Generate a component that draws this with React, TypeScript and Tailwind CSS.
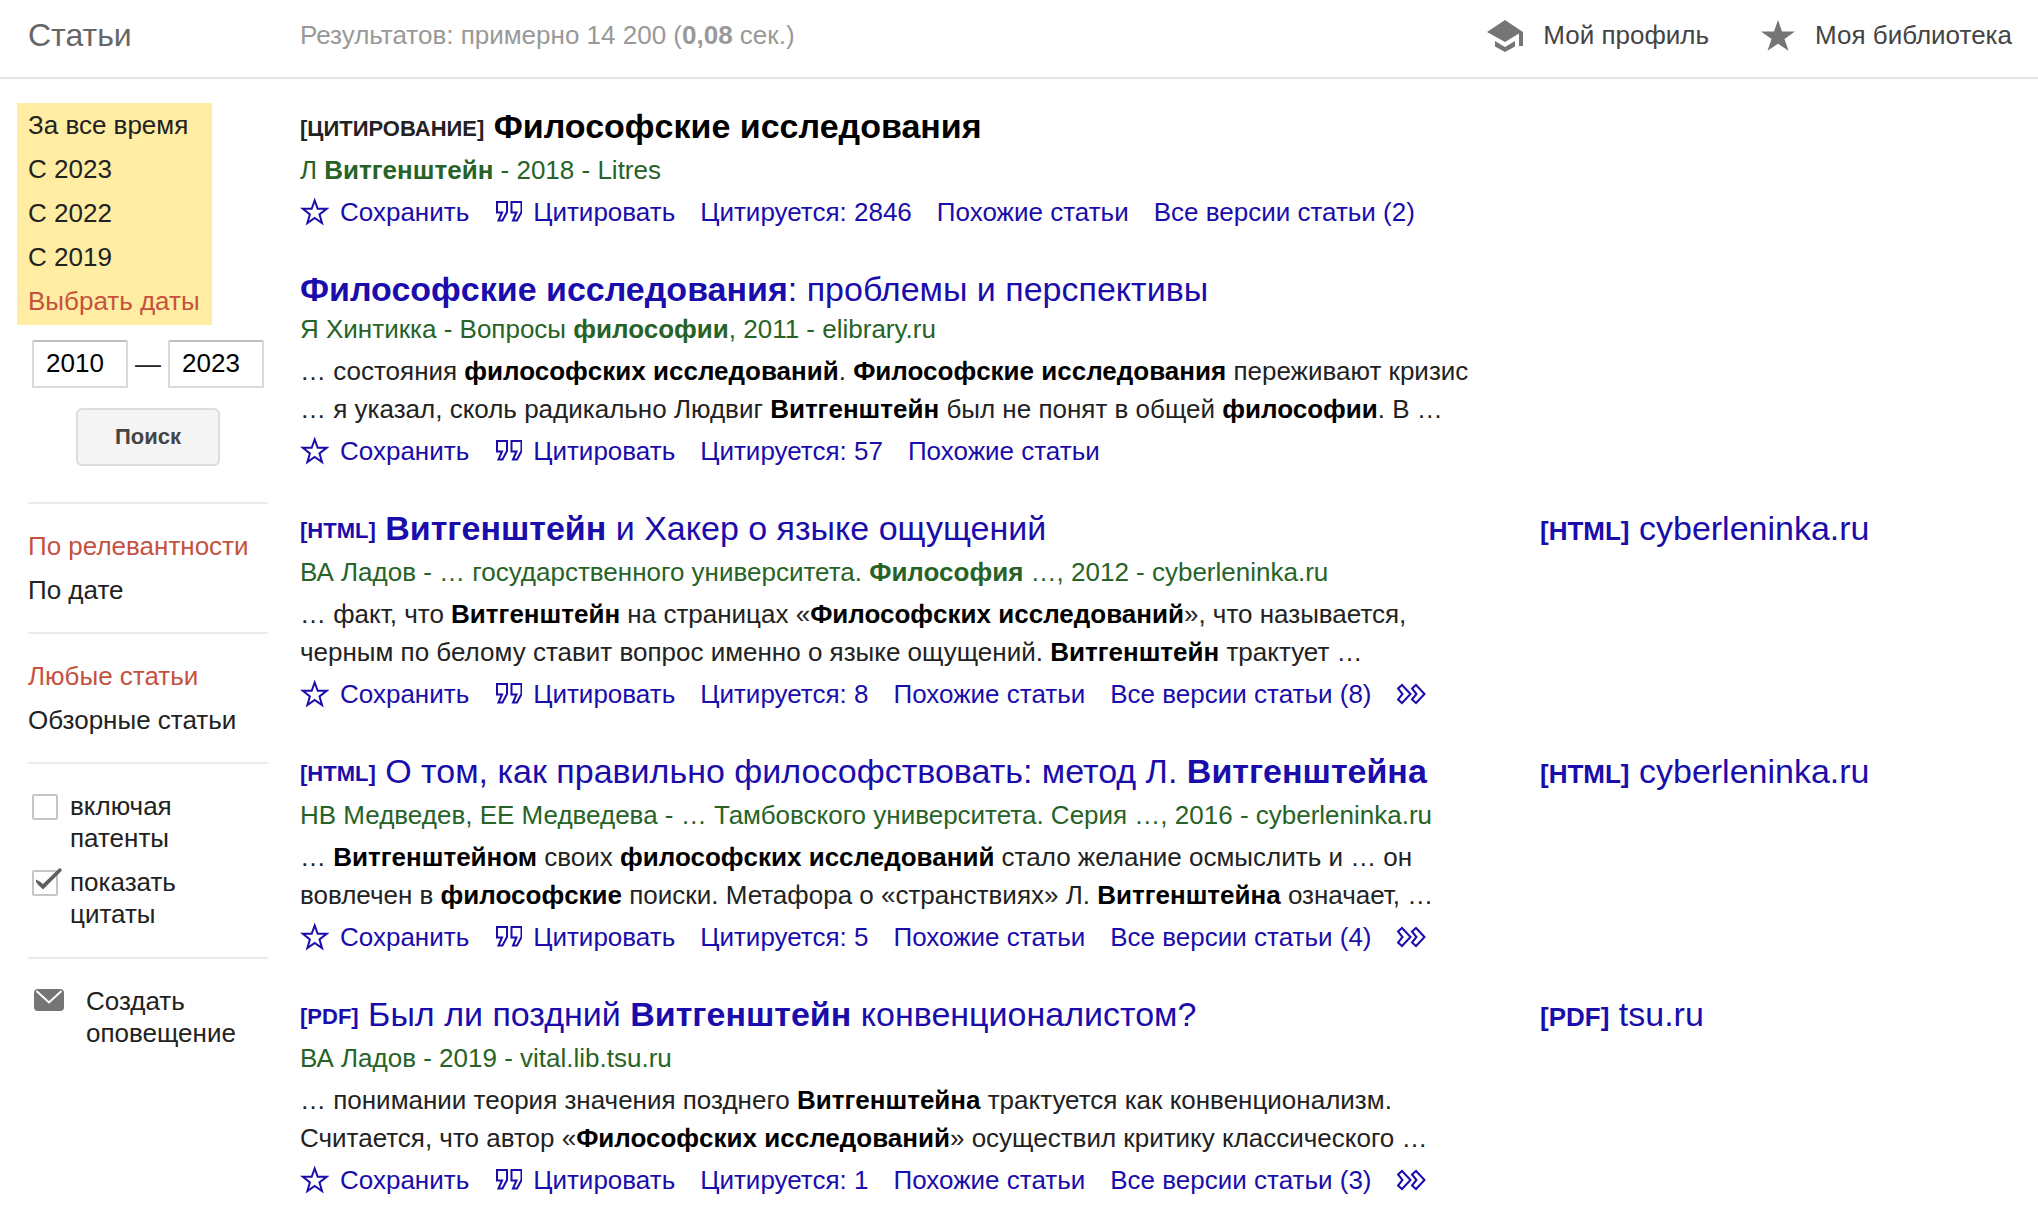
import React from "react";

type Action = { label: string; icon?: "star" | "quote" | "more" };

type Result = {
  tag?: string;
  citation?: boolean;
  title: React.ReactNode;
  meta: React.ReactNode;
  snippet?: React.ReactNode[];
  actions: Action[];
  source?: { tag: string; host: string };
};

const StarOutline = () => (
  <svg className="h-[30px] w-[29px] shrink-0" viewBox="0 0 29 30" fill="none" stroke="currentColor" strokeWidth="2" aria-hidden="true">
    <path d="M14.700 3.500 17.700 11.800H26.600L19.500 17.400 22 26 14.700 21 7.400 26 9.900 17.400 2.800 11.800H11.700Z" />
  </svg>
);

const Quotes = () => (
  <svg className="h-7 w-7 shrink-0" viewBox="0 0 28 28" fill="none" stroke="currentColor" strokeWidth="2" aria-hidden="true">
    <path d="M3 4H13V14L8.500 22.500H4.500L8 14.500H3Z" />
    <path d="M17.500 4H27.500V14L23 22.500H19L22.500 14.500H17.500Z" />
  </svg>
);

const Chevrons = () => (
  <svg className="h-7 w-8 shrink-0" viewBox="0 0 32 28" fill="none" stroke="currentColor" strokeWidth="2" aria-hidden="true">
    <path d="M1 8.500 5 5 13.500 14 5 23 1 19.500 5.500 14Z" />
    <path d="M15 8.500 19 5 27.500 14 19 23 15 19.500 19.500 14Z" />
  </svg>
);

const Cap = () => (
  <svg className="h-8 w-9" viewBox="0 0 36 32" fill="#757575" aria-hidden="true">
    <path d="M18 0 0 12 18 22 32 13.500V26H36V12Z" />
    <path d="M8 21V26.500L18 32 28 26.500V21L18 27Z" />
  </svg>
);

const StarSolid = () => (
  <svg className="h-8 w-[34px]" viewBox="0 0 34 32" fill="#757575" aria-hidden="true">
    <path d="M17 0 21 11.500H34L23.500 19 27.500 30.800 17 23.700 6.500 30.800 10.500 19 0 11.500H13Z" />
  </svg>
);

const Mail = () => (
  <svg className="h-6 w-8 shrink-0" viewBox="0 0 32 24" aria-hidden="true">
    <rect x="1" y="1" width="30" height="22" rx="4" fill="#757575" />
    <path d="M3.500 3 16 14.500 28.500 3" fill="none" stroke="#fff" strokeWidth="2" />
  </svg>
);

const icons = { star: <StarOutline />, quote: <Quotes />, more: <Chevrons /> };

const save: Action = { label: "Сохранить", icon: "star" };
const cite: Action = { label: "Цитировать", icon: "quote" };
const similar: Action = { label: "Похожие статьи" };
const more: Action = { label: "", icon: "more" };

const results: Result[] = [
  {
    tag: "[ЦИТИРОВАНИЕ]",
    citation: true,
    title: <b>Философские исследования</b>,
    meta: <>Л <b>Витгенштейн</b> - 2018 - Litres</>,
    actions: [save, cite, { label: "Цитируется: 2846" }, similar, { label: "Все версии статьи (2)" }],
  },
  {
    title: <><b>Философские исследования</b>: проблемы и перспективы</>,
    meta: <>Я Хинтикка - Вопросы <b>философии</b>, 2011 - elibrary.ru</>,
    snippet: [
      <>… состояния <b>философских исследований</b>. <b>Философские исследования</b> переживают кризис</>,
      <>… я указал, сколь радикально Людвиг <b>Витгенштейн</b> был не понят в общей <b>философии</b>. В …</>,
    ],
    actions: [save, cite, { label: "Цитируется: 57" }, similar],
  },
  {
    tag: "[HTML]",
    title: <><b>Витгенштейн</b> и Хакер о языке ощущений</>,
    meta: <>ВА Ладов - … государственного университета. <b>Философия</b> …, 2012 - cyberleninka.ru</>,
    snippet: [
      <>… факт, что <b>Витгенштейн</b> на страницах «<b>Философских исследований</b>», что называется,</>,
      <>черным по белому ставит вопрос именно о языке ощущений. <b>Витгенштейн</b> трактует …</>,
    ],
    actions: [save, cite, { label: "Цитируется: 8" }, similar, { label: "Все версии статьи (8)" }, more],
    source: { tag: "[HTML]", host: "cyberleninka.ru" },
  },
  {
    tag: "[HTML]",
    title: <>О том, как правильно философствовать: метод Л. <b>Витгенштейна</b></>,
    meta: <>НВ Медведев, ЕЕ Медведева - … Тамбовского университета. Серия …, 2016 - cyberleninka.ru</>,
    snippet: [
      <>… <b>Витгенштейном</b> своих <b>философских исследований</b> стало желание осмыслить и … он</>,
      <>вовлечен в <b>философские</b> поиски. Метафора о «странствиях» Л. <b>Витгенштейна</b> означает, …</>,
    ],
    actions: [save, cite, { label: "Цитируется: 5" }, similar, { label: "Все версии статьи (4)" }, more],
    source: { tag: "[HTML]", host: "cyberleninka.ru" },
  },
  {
    tag: "[PDF]",
    title: <>Был ли поздний <b>Витгенштейн</b> конвенционалистом?</>,
    meta: <>ВА Ладов - 2019 - vital.lib.tsu.ru</>,
    snippet: [
      <>… понимании теория значения позднего <b>Витгенштейна</b> трактуется как конвенционализм.</>,
      <>Считается, что автор «<b>Философских исследований</b>» осуществил критику классического …</>,
    ],
    actions: [save, cite, { label: "Цитируется: 1" }, similar, { label: "Все версии статьи (3)" }, more],
    source: { tag: "[PDF]", host: "tsu.ru" },
  },
];

function ResultItem({ r }: { r: Result }) {
  return (
    <article className="flex pb-[38px]">
      <div className="w-[1240px]">
        <h3 className={r.tag ? "pb-[5px] text-[34px] leading-10" : "pb-px text-[34px] leading-10"}>
          {r.tag && (
            <>
              <span className={r.citation ? "align-[2px] text-[22px] leading-none font-bold text-[#222]" : "align-[2px] text-[22px] leading-none font-bold text-[#1a0dab]"}>
                {r.tag}
              </span>{" "}
            </>
          )}
          {r.citation ? <span className="text-black">{r.title}</span> : <a href="#" className="text-[#1a0dab]">{r.title}</a>}
        </h3>
        <p className="leading-[38px] text-[#276327]">{r.meta}</p>
        {r.snippet && (
          <p className="pt-1 leading-[38px] [&_b]:text-black">
            {r.snippet.map((line, i) => (
              <span key={i} className="block">{line}</span>
            ))}
          </p>
        )}
        <div className="flex gap-[25px] pt-1 leading-[38px] text-[#1a0dab]">
          {r.actions.map((a, i) => (
            <a key={i} href="#" className="flex items-center gap-[11px]" aria-label={a.label || "Ещё"}>
              {a.icon && icons[a.icon]}
              {a.label}
            </a>
          ))}
        </div>
      </div>
      {r.source && (
        <a href="#" className="text-[34px] leading-10 text-[#1a0dab]">
          <span className="text-[26px] leading-none font-bold">{r.source.tag}</span> {r.source.host}
        </a>
      )}
    </article>
  );
}

function FilterLink({ children, active }: { children: React.ReactNode; active?: boolean }) {
  return (
    <li>
      <a href="#" className={active ? "block leading-11 text-[#c5523f]" : "block leading-11 text-[#222]"}>
        {children}
      </a>
    </li>
  );
}

function Check({ id, label, checked }: { id: string; label: React.ReactNode; checked?: boolean }) {
  return (
    <div className="flex gap-3">
      <span className="relative mt-1 ml-1 h-[26px] w-[26px] shrink-0">
        <input
          id={id}
          type="checkbox"
          defaultChecked={checked}
          className="peer block h-[26px] w-[26px] appearance-none rounded-[2px] border-2 border-[#c6c6c6] bg-white"
        />
        <svg className="pointer-events-none absolute -top-1 left-0 hidden h-[30px] w-[30px] peer-checked:block" viewBox="0 0 30 30" aria-hidden="true">
          <path d="M4 13.500Q8 15 11 18L27 2.500Q30 1.500 29.500 5L11 23.500Q6 19 4 16Z" fill="#5f5f5f" />
        </svg>
      </span>
      <label htmlFor={id} className="leading-8">{label}</label>
    </div>
  );
}

export default function App() {
  return (
    <div className="min-h-screen bg-white font-['Liberation_Sans',Arial,sans-serif] text-[26px] text-[#222]">
      <header className="flex h-[79px] items-center border-b-2 border-[#e5e5e5] pr-[26px] pb-1.5 pl-7">
        <h1 className="w-[272px] pb-0.5 text-[32px] text-[#666]">Статьи</h1>
        <p className="flex-1 text-[#999]">Результатов: примерно 14 200 (<b>0,08</b> сек.)</p>
        <nav className="flex gap-[52px] text-[#444]">
          <a href="#" className="flex items-center gap-5"><Cap />Мой профиль</a>
          <a href="#" className="flex items-center gap-5"><StarSolid />Моя библиотека</a>
        </nav>
      </header>
      <div className="flex">
        <aside className="w-[300px] shrink-0 pt-6 pl-7">
          <ul className="-ml-[11px] w-[195px] bg-[#ffeda3] pb-0.5 pl-[11px]">
            <FilterLink>За все время</FilterLink>
            <FilterLink>С 2023</FilterLink>
            <FilterLink>С 2022</FilterLink>
            <FilterLink>С 2019</FilterLink>
            <FilterLink active>Выбрать даты</FilterLink>
          </ul>
          <form className="w-60 pt-[15px] pb-9" onSubmit={(e) => e.preventDefault()}>
            <div className="ml-1 flex items-center gap-[7px]">
              <input aria-label="С года" defaultValue="2010" className="h-12 w-24 rounded-[2px] border-2 border-[#d9d9d9] border-t-[#c0c0c0] pb-0.5 pl-3 text-black" />
              <span>—</span>
              <input aria-label="По год" defaultValue="2023" className="h-12 w-24 rounded-[2px] border-2 border-[#d9d9d9] border-t-[#c0c0c0] pb-0.5 pl-3 text-black" />
            </div>
            <button type="submit" className="mx-auto mt-5 block h-[58px] w-36 rounded-md border-2 border-[#dcdcdc] bg-[#f4f4f4] pb-0.5 text-[22px] font-bold text-[#444]">
              Поиск
            </button>
          </form>
          <ul className="w-60 border-t-2 border-[#ebebeb] py-5">
            <FilterLink active>По релевантности</FilterLink>
            <FilterLink>По дате</FilterLink>
          </ul>
          <ul className="w-60 border-t-2 border-[#ebebeb] py-5">
            <FilterLink active>Любые статьи</FilterLink>
            <FilterLink>Обзорные статьи</FilterLink>
          </ul>
          <div className="flex w-60 flex-col gap-3 border-t-2 border-[#ebebeb] pt-[26px] pb-[27px]">
            <Check id="patents" label={<>включая<br />патенты</>} />
            <Check id="citations" checked label={<>показать<br />цитаты</>} />
          </div>
          <a href="#" className="flex w-60 gap-[21px] border-t-2 border-[#ebebeb] pt-[26px] pl-[5px] leading-8">
            <span className="pt-[3px]"><Mail /></span>
            <span>Создать<br />оповещение</span>
          </a>
        </aside>
        <main className="min-w-0 flex-1 pt-[27px]">
          {results.map((r, i) => (
            <ResultItem key={i} r={r} />
          ))}
        </main>
      </div>
    </div>
  );
}
